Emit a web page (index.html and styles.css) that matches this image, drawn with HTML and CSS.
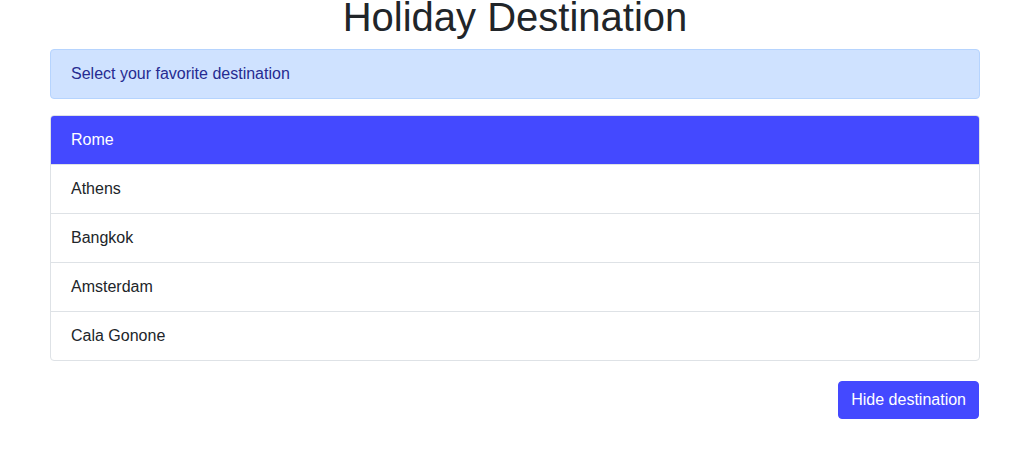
FILE: index.html
```html
<!DOCTYPE html>
<html lang="en">
<head>
<meta charset="utf-8">
<title>Holiday Destination</title>
<link rel="stylesheet" href="styles.css">
</head>
<body>
<div class="container">
  <h1 class="title">Holiday Destination</h1>
  <div class="alert">Select your favorite destination</div>
  <ul class="list">
    <li class="item active">Rome</li>
    <li class="item">Athens</li>
    <li class="item">Bangkok</li>
    <li class="item">Amsterdam</li>
    <li class="item">Cala Gonone</li>
  </ul>
  <div class="actions">
    <button class="btn" type="button">Hide destination</button>
  </div>
</div>
</body>
</html>
```

FILE: styles.css
```css
* { box-sizing: border-box; }
html, body { margin: 0; padding: 0; }
body {
  font-family: "Liberation Sans", Arial, sans-serif;
  font-size: 16px;
  line-height: 24px;
  color: #212529;
  background: #fff;
}
.container {
  width: 930px;
  margin-left: 50px;
}
.title {
  margin: -7px 0 8px;
  font-size: 40px;
  line-height: 48px;
  font-weight: 400;
  text-align: center;
  color: #212529;
}
.alert {
  padding: 12px 20px;
  background: #cfe2ff;
  border: 1px solid #b6d4fe;
  border-radius: 4px;
  color: #262b91;
  margin-bottom: 16px;
}
.list {
  list-style: none;
  margin: 0 0 20px;
  padding: 0;
  border: 1px solid #dee2e6;
  border-radius: 4px;
  overflow: hidden;
}
.item {
  padding: 12px 20px;
  border-top: 1px solid #dee2e6;
}
.item:first-child { border-top: 0; }
.item.active {
  background: #4449ff;
  color: #fff;
  margin: -1px -1px 0;
  padding: 13px 21px 12px;
}
.actions {
  display: flex;
  justify-content: flex-end;
  padding-right: 1px;
}
.btn {
  font-family: inherit;
  font-size: 16px;
  line-height: 24px;
  padding: 6px 12px;
  background: #4449ff;
  color: #fff;
  border: 1px solid #4449ff;
  border-radius: 4px;
  cursor: pointer;
}
```
